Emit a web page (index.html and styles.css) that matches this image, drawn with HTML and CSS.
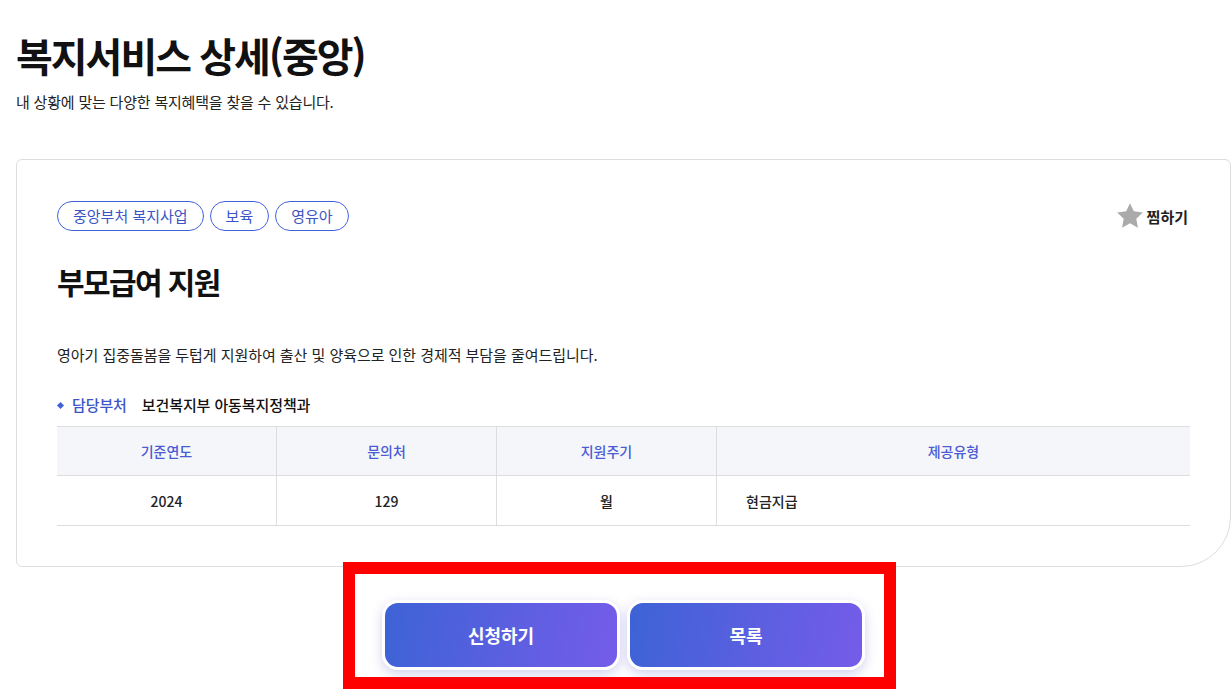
FILE: index.html
```html
<!DOCTYPE html>
<html lang="ko">
<head>
  <meta charset="UTF-8">
  <meta name="viewport" content="width=device-width, initial-scale=1.0">
  <title>복지서비스 상세(중앙)</title>
  <link rel="stylesheet" href="styles.css">
</head>
<body>
  <div class="page">
    <h1 class="page-title">복지서비스 상세(중앙)</h1>
    <p class="page-desc">내 상황에 맞는 다양한 복지혜택을 찾을 수 있습니다.</p>

    <!-- 상세 카드 -->
    <div class="detail-card">
      <div class="card-top">
        <div class="tags">
          <span class="tag">중앙부처 복지사업</span>
          <span class="tag">보육</span>
          <span class="tag">영유아</span>
        </div>
        <button class="bookmark">
          <svg width="28" height="28" viewBox="0 0 24 24"><path d="M12 1l3.3 7 7.7 1-5.6 5.3 1.4 7.7L12 18.2 5.2 22l1.4-7.7L1 9l7.7-1z" fill="#aaaaaa"/></svg>
          찜하기
        </button>
      </div>

      <h2 class="service-title">부모급여 지원</h2>
      <p class="service-desc">영아기 집중돌봄을 두텁게 지원하여 출산 및 양육으로 인한 경제적 부담을 줄여드립니다.</p>

      <div class="dept">
        <span class="dept-label">담당부처</span>
        <span class="dept-name">보건복지부 아동복지정책과</span>
      </div>

      <table class="info-table">
        <thead>
          <tr>
            <th class="col-a">기준연도</th>
            <th class="col-b">문의처</th>
            <th class="col-b">지원주기</th>
            <th>제공유형</th>
          </tr>
        </thead>
        <tbody>
          <tr>
            <td>2024</td>
            <td>129</td>
            <td>월</td>
            <td class="left">현금지급</td>
          </tr>
        </tbody>
      </table>
    </div>

    <div class="actions">
      <button class="btn">신청하기</button>
      <button class="btn">목록</button>
    </div>
  </div>
</body>
</html>
```

FILE: styles.css
```css
body {
  font-family: "Noto Sans CJK KR", "Noto Sans", sans-serif;
  color: #111;
  background-color: #fff;
  margin: 0;
  padding: 0;
}
.page {
  padding: 26px 0 0 16px;
}
.page-title {
  margin: 0;
  font-size: 40px;
  font-weight: 700;
  line-height: 58px;
  letter-spacing: -2px;
}
.page-desc {
  margin: 8px 0 0;
  font-size: 15px;
  line-height: 20px;
  color: #222;
  letter-spacing: -0.2px;
}
.detail-card {
  margin-top: 47px;
  border: 1px solid #dddddd;
  border-radius: 6px 6px 50px 6px;
  padding: 41px 40px 40px 40px;
}
.card-top {
  display: flex;
  justify-content: space-between;
  align-items: center;
}
.tags {
  display: flex;
  gap: 6px;
}
.tag {
  height: 30px;
  line-height: 28px;
  box-sizing: border-box;
  padding: 0 15px;
  border: 1px solid #3f62d9;
  border-radius: 15px;
  color: #3b55c4;
  font-size: 15px;
  letter-spacing: 0;
}
.bookmark {
  display: flex;
  align-items: center;
  gap: 3px;
  margin-right: 2px;
  border: none;
  background: none;
  padding: 0;
  font-family: inherit;
  font-size: 15px;
  font-weight: 700;
  color: #222;
  cursor: pointer;
}
.service-title {
  margin: 28px 0 0;
  font-size: 30px;
  font-weight: 700;
  line-height: 44px;
  letter-spacing: -1.6px;
}
.service-desc {
  margin: 41px 0 0;
  font-size: 15px;
  line-height: 22px;
  color: #222;
  letter-spacing: -0.05px;
}
.dept {
  margin-top: 28px;
  display: flex;
  align-items: center;
  font-size: 15px;
  line-height: 22px;
  letter-spacing: -0.1px;
}
.dept-label {
  position: relative;
  padding-left: 15px;
  color: #3b55c9;
  font-weight: 500;
  margin-right: 15px;
}
.dept-label::before {
  content: "";
  position: absolute;
  left: 1px;
  top: 9px;
  width: 5px;
  height: 5px;
  background: #3f62d9;
  transform: rotate(45deg);
}
.dept-name {
  color: #111;
  font-weight: 500;
}
.info-table {
  margin-top: 10px;
  width: 100%;
  border-collapse: collapse;
  border-top: 1px solid #dddddd;
  table-layout: fixed;
}
.info-table th,
.info-table td {
  padding: 0;
}
.info-table th {
  background-color: #f5f6fa;
  color: #4a5bd4;
  font-size: 14px;
  font-weight: 500;
  height: 48px;
  border-bottom: 1px solid #dddddd;
}
.info-table td {
  height: 49px;
  font-size: 14px;
  font-weight: 500;
  color: #222;
  text-align: center;
  border-bottom: 1px solid #dddddd;
}
.info-table th + th,
.info-table td + td {
  border-left: 1px solid #dddddd;
}
.info-table .col-a {
  width: 219px;
}
.info-table .col-b {
  width: 219px;
}
.info-table td.left {
  text-align: left;
  padding-left: 29px;
}
.actions {
  display: flex;
  gap: 7px;
  width: fit-content;
  margin: -5px 0 0 327px;
  padding: 26px 19px 7px 27px;
  border: 12px solid #ff0000;
}
.btn {
  width: 238px;
  height: 70px;
  border: 3px solid #fff;
  border-radius: 16px;
  background: linear-gradient(100deg, #3d63d6, #755ce9);
  box-shadow: 0 4px 12px rgba(90, 90, 200, 0.28);
  color: #fff;
  font-family: inherit;
  font-size: 18px;
  font-weight: 700;
  cursor: pointer;
}
```
